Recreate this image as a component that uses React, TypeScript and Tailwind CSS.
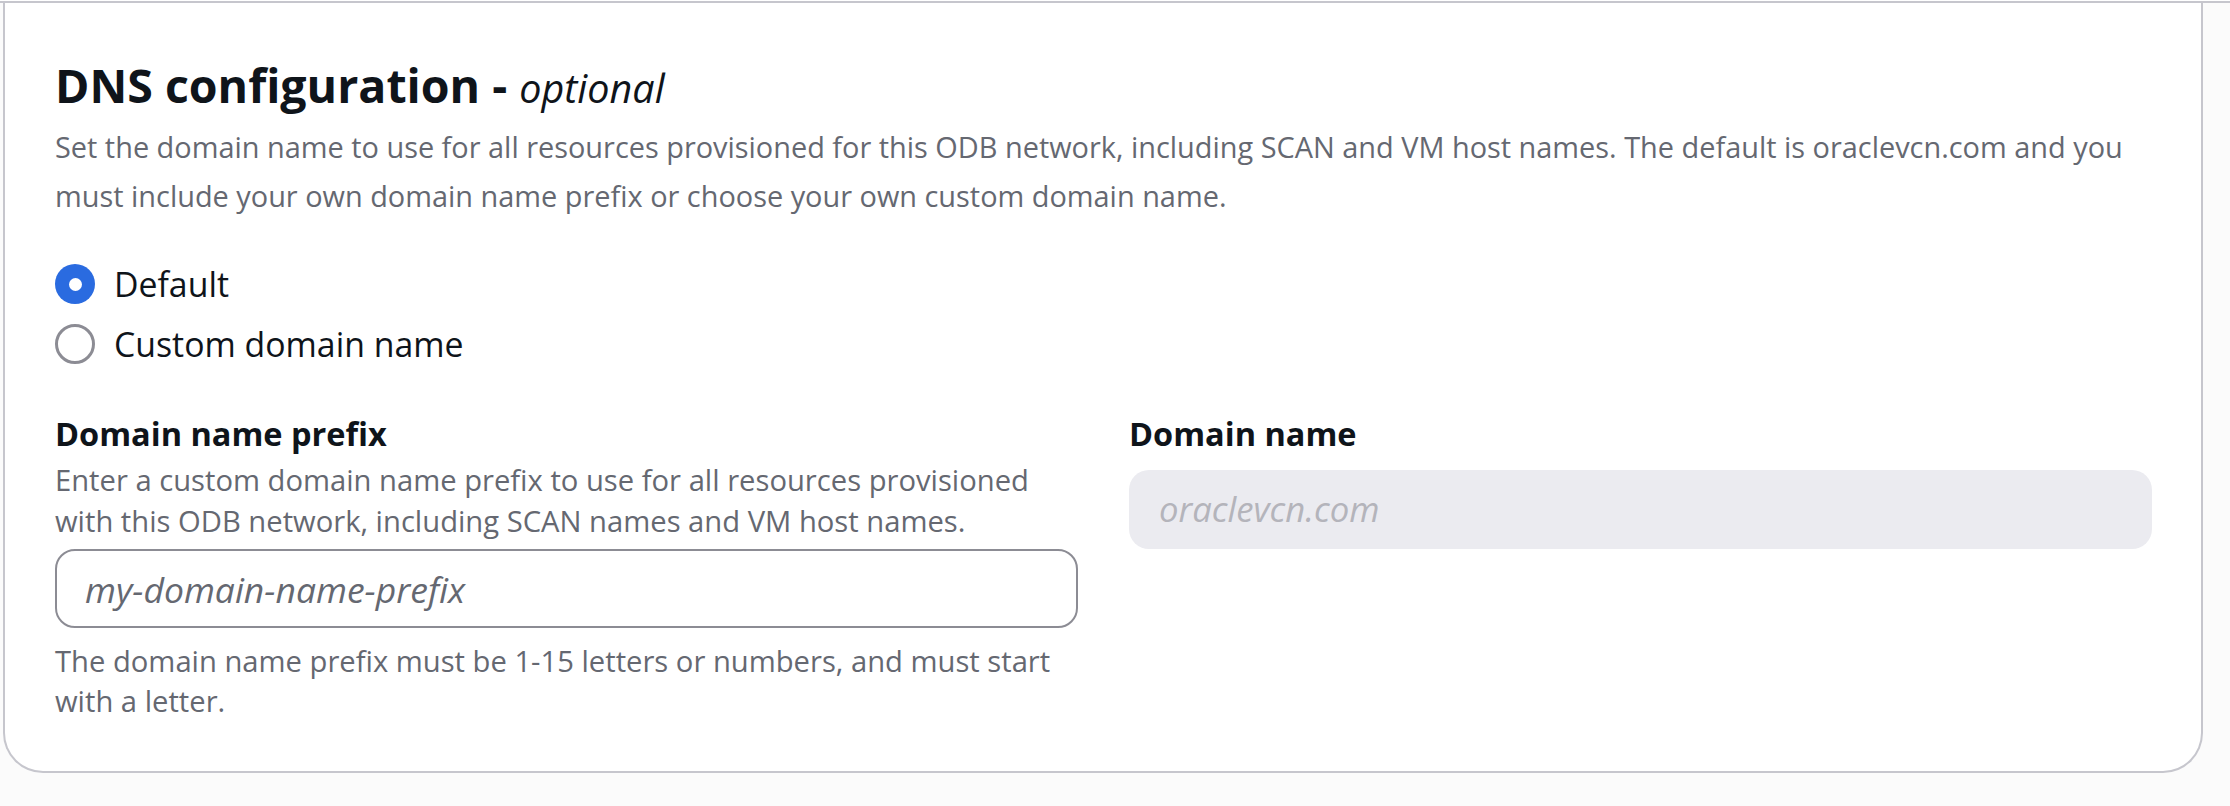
import { useState } from "react";

const font = { fontFamily: '"Open Sans", "Noto Sans", sans-serif' };

function Radio({
  checked,
  label,
  onSelect,
}: {
  checked: boolean;
  label: string;
  onSelect: () => void;
}) {
  return (
    <label
      className="flex h-[52px] cursor-pointer items-center gap-[19px]"
      onClick={onSelect}
    >
      {checked ? (
        <span className="flex h-[40px] w-[40px] shrink-0 items-center justify-center rounded-full bg-[#2a6be0]">
          <span className="h-[13px] w-[13px] rounded-full bg-white" />
        </span>
      ) : (
        <span className="h-[40px] w-[40px] shrink-0 rounded-full border-[3px] border-[#8c8c94] bg-white" />
      )}
      <span className="text-[33.8px] leading-[52px] text-[#0f141a]">
        {label}
      </span>
    </label>
  );
}

export default function App() {
  const [mode, setMode] = useState<"default" | "custom">("default");
  const [prefix, setPrefix] = useState("");

  return (
    <div className="min-h-screen bg-[#fbfbfb]" style={font}>
      <div className="mt-[1px] h-[2px] w-full bg-[#c6c6cd]" />

      <div className="pl-[3px] pr-[27px]">
        <section className="rounded-b-[40px] border-x-2 border-b-2 border-[#c6c6cd] bg-white pb-[50px] pl-[50px] pr-[49px] pt-[53px]">
          <h2 className="text-[46.5px] font-bold leading-[58px] text-[#0f141a]">
            DNS configuration -{" "}
            <i className="text-[39.5px] font-normal">optional</i>
          </h2>

          <p className="mt-[5px] text-[28.9px] leading-[49px] text-[#656871]">
            Set the domain name to use for all resources provisioned for this
            ODB network, including SCAN and VM host names. The default is
            oraclevcn.com and you must include your own domain name prefix or
            choose your own custom domain name.
          </p>

          <div className="mt-[38px] flex flex-col gap-[8px]">
            <Radio
              checked={mode === "default"}
              label="Default"
              onSelect={() => setMode("default")}
            />
            <Radio
              checked={mode === "custom"}
              label="Custom domain name"
              onSelect={() => setMode("custom")}
            />
          </div>

          <div className="mt-[41px] grid grid-cols-2 gap-x-[51px]">
            <div>
              <div className="text-[32.5px] font-bold leading-[46px] text-[#0f141a]">
                Domain name prefix
              </div>
              <p className="mt-[3px] text-[29.2px] leading-[41px] text-[#656871]">
                Enter a custom domain name prefix to use for all resources
                provisioned with this ODB network, including SCAN names and VM
                host names.
              </p>
              <input
                value={prefix}
                onChange={(e) => setPrefix(e.target.value)}
                placeholder="my-domain-name-prefix"
                className="mt-[7px] h-[79px] w-full rounded-[20px] border-2 border-[#8c8c94] bg-white pl-[28px] pr-[28px] text-[35.5px] text-[#0f141a] outline-none placeholder:italic placeholder:text-[#656871]"
                style={font}
              />
              <p className="mt-[13px] text-[29.2px] leading-[40px] text-[#656871]">
                The domain name prefix must be 1-15 letters or numbers, and must
                start with a letter.
              </p>
            </div>

            <div>
              <div className="text-[32.5px] font-bold leading-[46px] text-[#0f141a]">
                Domain name
              </div>
              <div className="mt-[13px] flex h-[79px] w-full items-center rounded-[20px] bg-[#ebebf0] pl-[30px] text-[34.7px] italic text-[#b4b4bb]">
                oraclevcn.com
              </div>
            </div>
          </div>
        </section>
      </div>
    </div>
  );
}
